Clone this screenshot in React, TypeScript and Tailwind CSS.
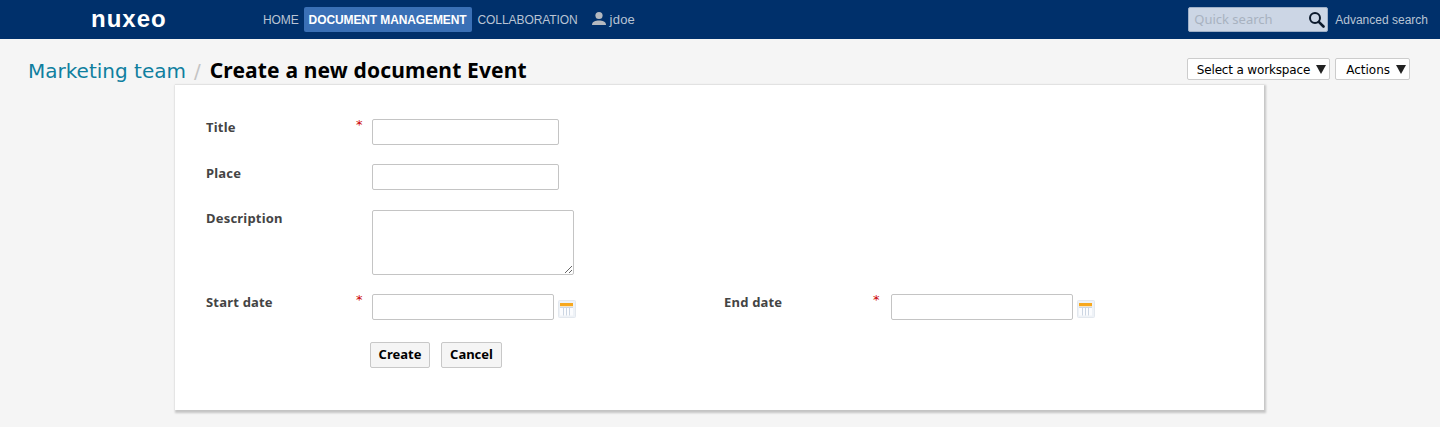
import React from 'react';

const uiFont = "font-['DejaVu_Sans','Noto_Sans',sans-serif]";
const boldFont = "font-['Noto_Sans','DejaVu_Sans',sans-serif]";

const fieldClass = 'block h-[26px] rounded-[2px] border border-[#c4c4c4] bg-white';

const CalendarIcon: React.FC = () => (
  <svg width="18" height="18" viewBox="0 0 18 18" className="mt-[6px] ml-[4px] shrink-0">
    <rect x="0.5" y="0.5" width="17" height="17" rx="1" fill="#eef2f7" stroke="#e3e8ee" />
    <rect x="2" y="3" width="13" height="3.5" fill="#f7a81e" />
    <rect x="2" y="6.5" width="13" height="9" fill="#fbfcfe" />
    <path d="M2 7.5h13M5.5 7.5V15.5M8.5 7.5V15.5M11.5 7.5V15.5" stroke="#ccd6e3" strokeWidth="1" fill="none" />
  </svg>
);

const Required: React.FC<{ width?: string }> = ({ width = 'w-[16px]' }) => (
  <span className={`block h-[16px] text-[13px] leading-[11px] text-[#cc0000] ${width}`}>*</span>
);

const FieldLabel: React.FC<{ text: string; width: string; className?: string }> = ({ text, width, className = '' }) => (
  <label className={`block text-[13px] leading-[16px] font-bold tracking-[0.2px] text-[#444444] ${boldFont} ${width} ${className}`}>{text}</label>
);

const DropButton: React.FC<{ label: string; className: string }> = ({ label, className }) => (
  <button className={`flex h-[22px] items-center gap-[6px] rounded-[2px] border border-[#cccccc] bg-white pt-[1px] pr-[3px] text-[12px] text-black ${className}`}>
    {label}
    <svg width="10" height="9" viewBox="0 0 10 9" className="shrink-0">
      <path d="M0 0h10L5 9z" fill="#222222" />
    </svg>
  </button>
);

const FormButton: React.FC<{ label: string; width: string }> = ({ label, width }) => (
  <button className={`h-[26px] rounded-[2px] border border-[#c8c8c8] bg-[#f5f5f5] text-[13px] font-bold text-black ${boldFont} ${width}`}>
    {label}
  </button>
);

export default function App() {
  return (
    <div className={`h-[427px] overflow-hidden bg-[#f5f5f5] ${uiFont}`}>
      <header className="flex h-[39px] items-center bg-[#00306b] font-['Liberation_Sans',Arial,sans-serif]">
        <div className="ml-[91px] w-[172px] pb-[2px] text-[24px] leading-none font-bold tracking-[1px] text-white">nuxeo</div>
        <nav className="flex items-center text-[12px] text-[#b9c4d4]">
          <a className="mr-[5px] tracking-[-0.1px]">HOME</a>
          <a className="mr-[6px] flex h-[25px] items-center rounded-[2px] bg-[#3a70b6] px-[5px] font-bold tracking-[-0.11px] text-white">DOCUMENT MANAGEMENT</a>
          <a className="mr-[13px] tracking-[-0.08px]">COLLABORATION</a>
          <svg width="16" height="15" viewBox="0 0 16 15" className="mr-[3px] mb-[2px]">
            <circle cx="8" cy="4.5" r="3.6" fill="#b4b9c0" />
            <path d="M1 14c0-3.5 3.5-4.5 7-4.5s7 1 7 4.5z" fill="#b4b9c0" />
          </svg>
          <span className="text-[13px] tracking-[0.2px]">jdoe</span>
        </nav>
        <div className="ml-auto flex items-center">
          <div className="flex h-[25px] w-[140px] items-center justify-between rounded-[2px] border border-[#9fb0c8] bg-[#ccd6e5] pr-[2px] pl-[5px]">
            <span className={`text-[13px] text-[#a8b2c0] ${boldFont}`}>Quick search</span>
            <svg width="17" height="17" viewBox="0 0 17 17" fill="none" stroke="#0c1a2c">
              <circle cx="7" cy="7" r="5" strokeWidth="2" />
              <path d="M10.8 10.8L15.5 15.5" strokeWidth="2.6" strokeLinecap="round" />
            </svg>
          </div>
          <a className="mr-[12px] ml-[7px] text-[12px] text-[#b9c4d4]">Advanced search</a>
        </div>
      </header>

      <div className="flex h-[45px] items-end justify-between pr-[30px] pl-[28px]">
        <h1 className={`text-[21px] leading-[26px] font-bold tracking-[0.15px] text-black ${boldFont}`}>
          <span className={`text-[20px] font-normal tracking-normal text-[#0f7f9f] ${uiFont}`}>Marketing team</span>
          <span className={`mr-[9px] ml-[8px] text-[20px] font-normal tracking-normal text-[#c4c4c4] ${uiFont}`}>/</span>
          Create a new document Event
        </h1>
        <div className="mb-[4px] flex gap-[5px]">
          <DropButton label="Select a workspace" className="pl-[9px] tracking-[-0.16px]" />
          <DropButton label="Actions" className="pl-[10px]" />
        </div>
      </div>

      <main className="ml-[175px] h-[326px] w-[1089px] border-t border-[#e2e2e2] bg-white pt-[34px] pl-[31px] shadow-[1px_2px_2px_1px_rgba(0,0,0,0.2)]">
        <div className="flex">
          <FieldLabel text="Title" width="w-[150px]" />
          <Required />
          <input className={`${fieldClass} w-[187px]`} />
        </div>
        <div className="mt-[19px] flex">
          <FieldLabel text="Place" width="w-[166px]" className="pt-[1px]" />
          <input className={`${fieldClass} w-[187px]`} />
        </div>
        <div className="mt-[20px] flex">
          <FieldLabel text="Description" width="w-[166px]" />
          <textarea className="block h-[65px] w-[202px] rounded-[2px] border border-[#c4c4c4] bg-white" />
        </div>
        <div className="mt-[19px] flex">
          <div className="flex w-[518px]">
            <FieldLabel text="Start date" width="w-[150px]" />
            <Required />
            <input className={`${fieldClass} w-[182px]`} />
            <CalendarIcon />
          </div>
          <div className="flex">
            <FieldLabel text="End date" width="w-[149px]" />
            <Required width="w-[18px]" />
            <input className={`${fieldClass} w-[182px]`} />
            <CalendarIcon />
          </div>
        </div>
        <div className="mt-[22px] ml-[164px] flex gap-[11px]">
          <FormButton label="Create" width="w-[60px]" />
          <FormButton label="Cancel" width="w-[61px]" />
        </div>
      </main>
    </div>
  );
}
